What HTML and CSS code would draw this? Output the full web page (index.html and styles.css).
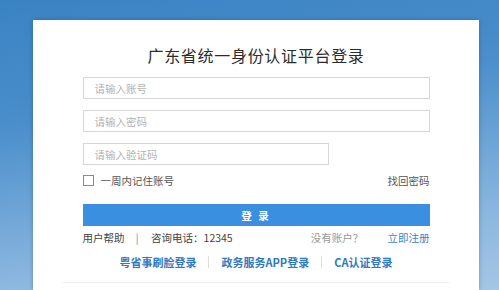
FILE: index.html
```html
<!DOCTYPE html>
<html lang="zh-CN">
<head>
    <meta charset="UTF-8">
    <meta name="viewport" content="width=device-width, initial-scale=1.0">
    <title>广东省统一身份认证平台登录</title>
    <link rel="stylesheet" href="styles.css">
</head>
<body>
    <div class="page">
        <div class="card">
            <h1 class="title">广东省统一身份认证平台登录</h1>
            <form class="login">
                <input class="field" type="text" placeholder="请输入账号">
                <input class="field" type="password" placeholder="请输入密码">
                <input class="field short" type="text" placeholder="请输入验证码">

                <div class="row remember">
                    <label class="check"><span class="box"></span>一周内记住账号</label>
                    <a class="muted" href="#">找回密码</a>
                </div>

                <button class="btn" type="button">登 录</button>

                <div class="row help">
                    <div>
                        <span>用户帮助</span>
                        <span class="bar">|</span>
                        <span>咨询电话：12345</span>
                    </div>
                    <div>
                        <span class="light">没有账户？</span>
                        <a class="reg" href="#">立即注册</a>
                    </div>
                </div>
            </form>

            <div class="other">
                <a href="#">粤省事刷脸登录</a>
                <span class="sep"></span>
                <a href="#">政务服务APP登录</a>
                <span class="sep"></span>
                <a href="#">CA认证登录</a>
            </div>
            <div class="line"></div>
        </div>
    </div>
</body>
</html>
```

FILE: styles.css
```css
html, body {
    margin: 0;
    height: 100%;
}
body {
    font-family: "Noto Sans CJK SC", "Liberation Sans", sans-serif;
    background: linear-gradient(172deg, #3a83c3 0%, #4a8ecb 35%, #8db8e0 80%, #a5c6e5 100%);
    overflow: hidden;
}
.page {
    padding: 20px 20px 0 33px;
}
.card {
    width: 446px;
    height: 270px;
    background: #fff;
    box-shadow: 0 0 4px rgba(20, 50, 90, 0.35);
    padding-top: 25px;
    box-sizing: border-box;
    display: flex;
    flex-direction: column;
    align-items: center;
    overflow: hidden;
}
.title {
    margin: 0 0 12px;
    font-size: 16px;
    line-height: 20px;
    font-weight: normal;
    color: #2b2b2b;
    letter-spacing: 0.7px;
}
.login {
    width: 347px;
    display: flex;
    flex-direction: column;
}
.field {
    box-sizing: border-box;
    width: 100%;
    height: 22px;
    margin: 0 0 11px;
    padding: 0 11px;
    border: 1px solid #d6d6d6;
    outline: none;
    font-family: inherit;
    font-size: 10.5px;
    color: #333;
}
.field::placeholder {
    color: #b3b3b3;
}
.field.short {
    width: 246px;
    margin-bottom: 8px;
}
.row {
    display: flex;
    justify-content: space-between;
    align-items: center;
    height: 14px;
    font-size: 10.5px;
    color: #555;
}
.row a {
    text-decoration: none;
}
.check {
    display: flex;
    align-items: center;
    color: #555;
}
.box {
    width: 9px;
    height: 9px;
    border: 1px solid #8a8a8a;
    margin-right: 7px;
}
.muted {
    color: #555;
}
.btn {
    margin-top: 17px;
    height: 22px;
    border: none;
    background: #3a8fe0;
    color: #fff;
    font-family: inherit;
    font-size: 10.5px;
    font-weight: bold;
    letter-spacing: 2px;
    padding: 0;
}
.help {
    margin-top: 4px;
    color: #444;
}
.bar {
    color: #888;
    margin: 0 10px 0 9px;
}
.light {
    color: #999;
    margin-right: 22px;
}
.reg {
    color: #3a85d0;
}
.other {
    margin-top: 11px;
    height: 14px;
    display: flex;
    align-items: center;
    font-size: 11px;
    font-weight: bold;
}
.other a {
    color: #2f78c2;
    text-decoration: none;
}
.sep {
    width: 1px;
    height: 12px;
    background: #dcdcdc;
    margin: 0 12px;
}
.line {
    margin-top: 13px;
    width: 386px;
    border-top: 1px solid #ececec;
}
```
